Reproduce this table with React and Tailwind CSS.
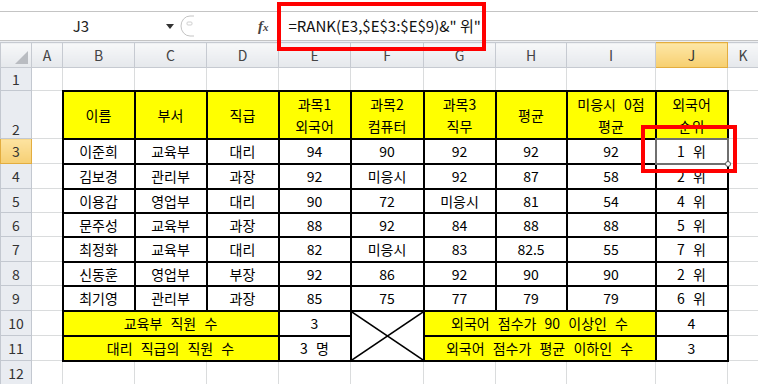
import React from 'react';

const colWidths = ['w-[31px]', 'w-[31px]', 'w-[72px]', 'w-[72px]', 'w-[72px]', 'w-[72px]', 'w-[73px]', 'w-[72px]', 'w-[71px]', 'w-[89px]', 'w-[72px]', 'w-[31px]'];
const letters = ['A', 'B', 'C', 'D', 'E', 'F', 'G', 'H', 'I', 'J', 'K'];

const headings = [
  ['이름'], ['부서'], ['직급'], ['과목1', '외국어'], ['과목2', '컴퓨터'], ['과목3', '직무'], ['평균'], ['미응시 0점', '평균'], ['외국어', '순위'],
];

const people = [
  { n: 3, h: 'h-[25px]', cells: ['이준희', '교육부', '대리', '94', '90', '92', '92', '92', '1 위'] },
  { n: 4, h: 'h-[25px]', cells: ['김보경', '관리부', '과장', '92', '미응시', '92', '87', '58', '2 위'] },
  { n: 5, h: 'h-[24px]', cells: ['이용갑', '영업부', '대리', '90', '72', '미응시', '81', '54', '4 위'] },
  { n: 6, h: 'h-[24px]', cells: ['문주성', '교육부', '과장', '88', '92', '84', '88', '88', '5 위'] },
  { n: 7, h: 'h-[25px]', cells: ['최정화', '교육부', '대리', '82', '미응시', '83', '82.5', '55', '7 위'] },
  { n: 8, h: 'h-[24px]', cells: ['신동훈', '영업부', '부장', '92', '86', '92', '90', '90', '2 위'] },
  { n: 9, h: 'h-[25px]', cells: ['최기영', '관리부', '과장', '85', '75', '77', '79', '79', '6 위'] },
];

const grid = 'border border-[#dadcdd] p-0';
const box = 'border-2 border-black p-0 text-center align-middle';
const yellow = 'border-2 border-black bg-[#ffff00] p-0 text-center align-middle';
const rowHead = 'border border-[#c3c8d0] bg-[#e9ecf1] p-0 text-center align-middle text-[14px] font-normal text-[#333]';
const colHead = 'border border-[#c6cad1] bg-linear-to-b from-[#f7f8f9] to-[#e5e8ec] p-0 text-center align-middle text-[14px] font-normal text-[#444]';

function FormulaBar() {
  return (
    <div className="flex h-[30px] items-center border-y border-[#c4c4c4] bg-white">
      <div className="w-[162px] text-center text-[15px] text-[#222]">J3</div>
      <svg className="ml-[4px]" width="8" height="5" viewBox="0 0 8 5">
        <path d="M0 0 H8 L4 5 Z" fill="#333" />
      </svg>
      <svg className="ml-[6px]" width="16" height="22" viewBox="0 0 16 22">
        <path d="M14 1 H10 A9 10 0 0 0 10 21 H14" fill="none" stroke="#c4c4c4" />
        <rect x="7" y="7" width="5" height="3" rx="1" fill="none" stroke="#cfcfcf" />
      </svg>
      <span className="ml-[62px] font-['Liberation_Serif',serif] text-[15px] font-bold italic text-[#444]">
        f<span className="text-[11px]">x</span>
      </span>
      <div className="ml-[20px] text-[15px] text-[#111]">=RANK(E3,$E$3:$E$9)&amp;" 위"</div>
    </div>
  );
}

function Sheet() {
  return (
    <table className="w-[758px] table-fixed border-collapse text-[14px] leading-[18px] [word-spacing:5px]">
      <colgroup>
        {colWidths.map((w, i) => (
          <col key={i} className={w} />
        ))}
      </colgroup>
      <thead>
        <tr className="h-[25px]">
          <th className={colHead + ' relative'}>
            <svg className="absolute right-[3px] bottom-[3px]" width="13" height="13" viewBox="0 0 13 13">
              <path d="M13 0 V13 H0 Z" fill="#b9bcc1" />
            </svg>
          </th>
          {letters.map((l) =>
            l === 'J' ? (
              <th key={l} className="border border-[#e3ad3f] bg-linear-to-b from-[#fde7a6] to-[#f7cf6e] p-0 text-center align-middle text-[14px] font-normal text-[#333]">
                {l}
              </th>
            ) : (
              <th key={l} className={colHead}>{l}</th>
            )
          )}
        </tr>
      </thead>
      <tbody>
        <tr className="h-[23px]">
          <th className={rowHead}>1</th>
          {letters.map((l) => (
            <td key={l} className={grid} />
          ))}
        </tr>

        <tr className="h-[48px]">
          <th className={rowHead + ' !align-bottom'}>2</th>
          <td className={grid} />
          {headings.map((h, i) => (
            <td key={i} className={yellow}>
              <div className="leading-[22px]">
                {h.map((line, j) => (
                  <div key={j}>{line}</div>
                ))}
              </div>
            </td>
          ))}
          <td className={grid} />
        </tr>

        {people.map((p) => (
          <tr key={p.n} className={p.h}>
            {p.n === 3 ? (
              <th className="border border-[#e3ad3f] bg-linear-to-b from-[#fde3a0] to-[#f6cf73] p-0 text-center align-middle text-[14px] font-normal text-[#333]">3</th>
            ) : (
              <th className={rowHead}>{p.n}</th>
            )}
            <td className={grid} />
            {p.cells.map((c, i) =>
              p.n === 3 && i === 8 ? (
                <td key={i} className={box + ' relative'}>
                  {c}
                  <div className="absolute -inset-[2px] border-2 border-[#6f6f6f]" />
                  <div className="absolute -right-[4px] -bottom-[4px] h-[6px] w-[6px] rounded-full border border-[#555] bg-white" />
                </td>
              ) : (
                <td key={i} className={box}>{c}</td>
              )
            )}
            <td className={grid} />
          </tr>
        ))}

        <tr className="h-[25px]">
          <th className={rowHead}>10</th>
          <td className={grid} />
          <td colSpan={3} className={yellow}>교육부 직원 수</td>
          <td className={box}>3</td>
          <td rowSpan={2} className={box + ' relative'}>
            <svg className="absolute inset-0 h-full w-full" viewBox="0 0 100 100" preserveAspectRatio="none">
              <line x1="0" y1="0" x2="100" y2="100" stroke="#000" strokeWidth="1.5" vectorEffect="non-scaling-stroke" />
              <line x1="100" y1="0" x2="0" y2="100" stroke="#000" strokeWidth="1.5" vectorEffect="non-scaling-stroke" />
            </svg>
          </td>
          <td colSpan={3} className={yellow}>외국어 점수가 90 이상인 수</td>
          <td className={box}>4</td>
          <td className={grid} />
        </tr>

        <tr className="h-[25px]">
          <th className={rowHead}>11</th>
          <td className={grid} />
          <td colSpan={3} className={yellow}>대리 직급의 직원 수</td>
          <td className={box}>3 명</td>
          <td colSpan={3} className={yellow}>외국어 점수가 평균 이하인 수</td>
          <td className={box}>3</td>
          <td className={grid} />
        </tr>

        <tr className="h-[24px]">
          <th className={rowHead}>12</th>
          {letters.map((l) => (
            <td key={l} className={grid} />
          ))}
        </tr>
      </tbody>
    </table>
  );
}

export default function App() {
  return (
    <div className="relative h-[384px] w-[758px] overflow-hidden bg-white font-['Noto_Sans_CJK_KR','Noto_Sans',sans-serif] text-black">
      <div className="h-[11px] bg-white" />
      <FormulaBar />
      <div className="h-px bg-[#eceef1]" />
      <Sheet />

      {/* red callouts */}
      <div className="absolute left-[277px] top-[2px] h-[49px] w-[209px] border-4 border-[#ff0000]" />
      <div className="absolute left-[641px] top-[125px] h-[48px] w-[96px] border-4 border-[#ff0000]" />
    </div>
  );
}
